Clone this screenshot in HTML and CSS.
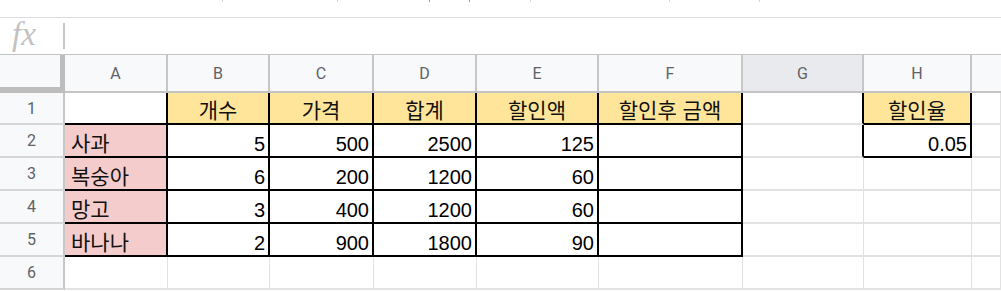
FILE: index.html
```html
<!DOCTYPE html>
<html lang="ko">
<head>
  <meta charset="UTF-8" />
  <title>Sheet</title>
  <link rel="stylesheet" href="styles.css">
</head>
<body>
  <div class="top-strip">
    <span class="tick t1"></span>
    <span class="tick t2"></span>
    <span class="tick t3"></span>
    <span class="tick t4"></span>
    <span class="tick t5"></span>
    <span class="tick t6"></span>
    <span class="tick t7"></span>
  </div>

  <div class="formula-bar">
    <div class="fx">fx</div>
    <div class="fx-divider"></div>
  </div>

  <div class="sheet">
    <!-- column headers -->
    <div class="corner"></div>
    <div class="ch">A</div>
    <div class="ch">B</div>
    <div class="ch">C</div>
    <div class="ch">D</div>
    <div class="ch">E</div>
    <div class="ch">F</div>
    <div class="ch sel">G</div>
    <div class="ch">H</div>
    <div class="ch last"></div>

    <!-- row 1 -->
    <div class="rh">1</div>
    <div class="c bk"></div>
    <div class="c y bk ctr ko">개수</div>
    <div class="c y bk ctr ko">가격</div>
    <div class="c y bk ctr ko">합계</div>
    <div class="c y bk ctr ko">할인액</div>
    <div class="c y bk ctr ko">할인후 금액</div>
    <div class="c bkr"></div>
    <div class="c y bk ctr ko">할인율</div>
    <div class="c"></div>

    <!-- row 2 -->
    <div class="rh">2</div>
    <div class="c p bk ko">사과</div>
    <div class="c bk num">5</div>
    <div class="c bk num">500</div>
    <div class="c bk num">2500</div>
    <div class="c bk num">125</div>
    <div class="c bk"></div>
    <div class="c bkr"></div>
    <div class="c bk num">0.05</div>
    <div class="c"></div>

    <!-- row 3 -->
    <div class="rh">3</div>
    <div class="c p bk ko">복숭아</div>
    <div class="c bk num">6</div>
    <div class="c bk num">200</div>
    <div class="c bk num">1200</div>
    <div class="c bk num">60</div>
    <div class="c bk"></div>
    <div class="c"></div>
    <div class="c"></div>
    <div class="c"></div>

    <!-- row 4 -->
    <div class="rh">4</div>
    <div class="c p bk ko">망고</div>
    <div class="c bk num">3</div>
    <div class="c bk num">400</div>
    <div class="c bk num">1200</div>
    <div class="c bk num">60</div>
    <div class="c bk"></div>
    <div class="c"></div>
    <div class="c"></div>
    <div class="c"></div>

    <!-- row 5 -->
    <div class="rh">5</div>
    <div class="c p bk ko">바나나</div>
    <div class="c bk num">2</div>
    <div class="c bk num">900</div>
    <div class="c bk num">1800</div>
    <div class="c bk num">90</div>
    <div class="c bk"></div>
    <div class="c"></div>
    <div class="c"></div>
    <div class="c"></div>

    <!-- row 6 -->
    <div class="rh">6</div>
    <div class="c"></div>
    <div class="c"></div>
    <div class="c"></div>
    <div class="c"></div>
    <div class="c"></div>
    <div class="c"></div>
    <div class="c"></div>
    <div class="c"></div>
    <div class="c"></div>
  </div>
</body>
</html>
```

FILE: styles.css
```css
* {
  box-sizing: border-box;
}

body {
  margin: 0;
  width: 1001px;
  height: 291px;
  overflow: hidden;
  background: #fff;
  font-family: "Liberation Sans", "Noto Sans CJK KR", sans-serif;
}

/* cut-off toolbar remains at the very top */
.top-strip {
  height: 18px;
  display: flex;
  border-bottom: 1px solid #dadce0;
}

.tick {
  width: 1px;
  height: 2px;
  background: #d4d4d4;
}

.t1 { margin-left: 222px; }
.t2 { margin-left: 114px; }
.t3 { margin-left: 91px; background: #9a9a9a; }
.t4 { margin-left: 39px; background: #9a9a9a; }
.t5 { margin-left: 60px; }
.t6 { margin-left: 138px; }
.t7 { margin-left: 89px; }

/* formula bar */
.formula-bar {
  height: 37px;
  display: flex;
  align-items: center;
  border-bottom: 1px solid #c4c4c4;
}

.fx {
  width: 63px;
  padding-left: 12px;
  font-family: "Liberation Serif", serif;
  font-style: italic;
  font-size: 33px;
  line-height: 1;
  color: #c2c2c2;
  margin-top: -3px;
}

.fx-divider {
  width: 2px;
  height: 26px;
  background: #c7c7c7;
}

/* grid */
.sheet {
  display: grid;
  grid-template-columns: 65px 103px 102px 104px 103px 122px 144px 121px 108px 29px;
  grid-template-rows: 38px 32px 33px 33px 33px 33px 33px;
}

.corner {
  background: #f8f9fa;
  border-right: 5px solid #bdbdbd;
  border-bottom: 6px solid #bdbdbd;
}

.ch {
  background: #f8f9fa;
  border-right: 2px solid #c7c7c7;
  border-bottom: 2px solid #c4c4c4;
  display: flex;
  align-items: center;
  justify-content: center;
  font-family: Roboto, "Liberation Sans", sans-serif;
  font-size: 16px;
  color: #5f6368;
  padding-top: 1px;
}

.ch.sel {
  background: #e8eaed;
}

.ch.last {
  border-right: none;
}

.rh {
  background: #f8f9fa;
  border-right: 2px solid #c7c7c7;
  border-bottom: 2px solid #d6d6d6;
  display: flex;
  align-items: center;
  justify-content: center;
  font-family: Roboto, "Liberation Sans", sans-serif;
  font-size: 16px;
  color: #5f6368;
}

.c {
  border-right: 1px solid #e2e2e2;
  border-bottom: 2px solid #e2e2e2;
  display: flex;
  align-items: flex-end;
  padding: 0 3px 0 6px;
  font-size: 20px;
  line-height: 24px;
  color: #000;
  white-space: nowrap;
}

.ko {
  font-size: 21px;
  color: #111;
}

.y {
  background: #ffe599;
}

.p {
  background: #f4cccc;
}

.bk {
  border-right: 2px solid #000;
  border-bottom: 2px solid #000;
}

.bkr {
  border-right: 2px solid #000;
}

.ctr {
  justify-content: center;
  padding: 0 2px;
}

.num {
  justify-content: flex-end;
}
```
